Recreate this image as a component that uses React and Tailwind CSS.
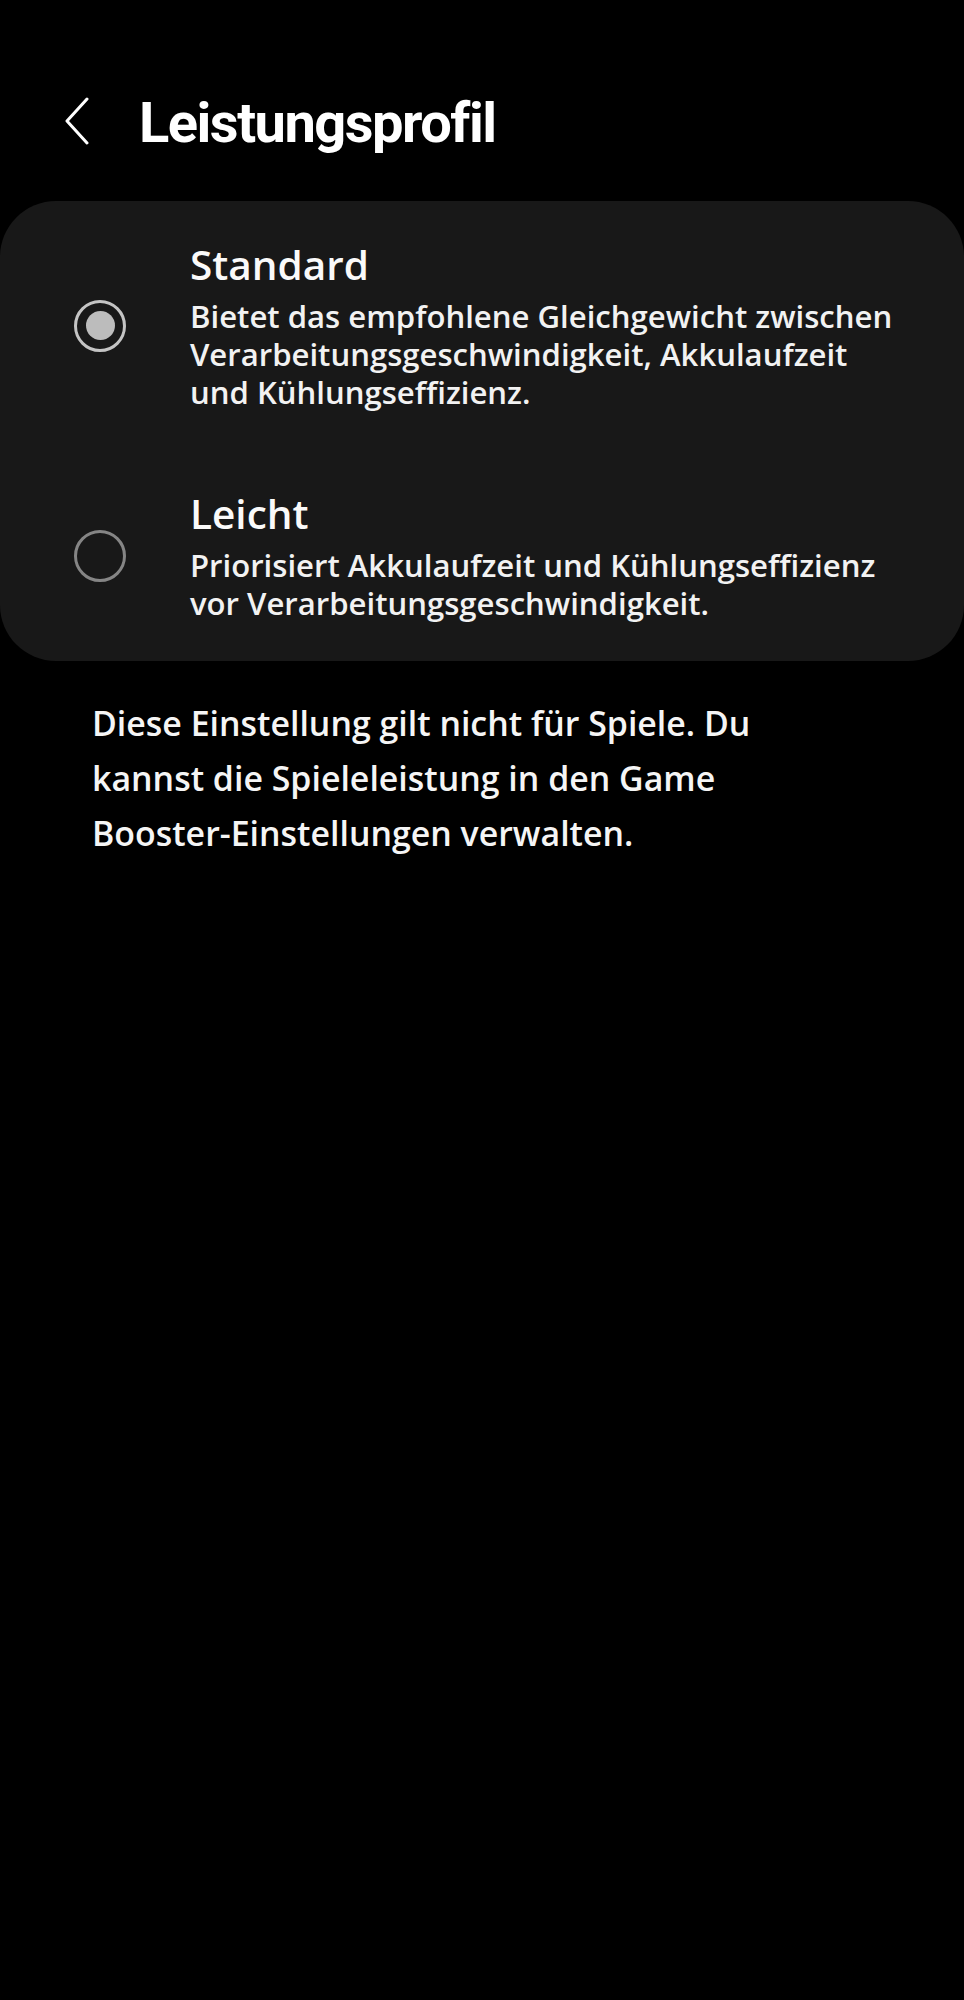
const options = [
  {
    title: "Standard",
    lines: [
      "Bietet das empfohlene Gleichgewicht zwischen",
      "Verarbeitungsgeschwindigkeit, Akkulaufzeit",
      "und Kühlungseffizienz.",
    ],
    checked: true,
  },
  {
    title: "Leicht",
    lines: [
      "Priorisiert Akkulaufzeit und Kühlungseffizienz",
      "vor Verarbeitungsgeschwindigkeit.",
    ],
    checked: false,
  },
]

const Radio = ({ checked }) =>
  checked ? (
    <div className="w-[52px] h-[52px] shrink-0 rounded-full border-[3px] border-[#c4c4c4] flex items-center justify-center">
      <div className="w-[29px] h-[29px] rounded-full bg-[#bcbcbc]" />
    </div>
  ) : (
    <div className="w-[52px] h-[52px] shrink-0 rounded-full border-[3px] border-[#858585]" />
  )

const OptionRow = ({ data }) => (
  <div className="flex items-center pl-[74px] py-[39px]">
    <Radio checked={data.checked} />
    <div className="ml-[64px]">
      <div className="text-[40.5px] leading-[50px] font-semibold text-[#fafafa]">{data.title}</div>
      <p className="mt-[7px] text-[31.1px] leading-[38px] font-semibold text-[#f2f2f2] whitespace-nowrap">
        {data.lines.map((line, i) => (
          <span key={i} className="block">{line}</span>
        ))}
      </p>
    </div>
  </div>
)

export default function App() {
  return (
    <div className="w-[964px] min-h-[2000px] bg-black font-['Open_Sans',sans-serif] text-white pt-[91px]">
      {/* header */}
      <div className="flex items-start pl-[65px]">
        <svg className="mt-[6px] shrink-0" width="24" height="48" viewBox="0 0 24 48" fill="none">
          <polyline points="22,2 2,24 22,46" stroke="#ffffff" strokeWidth="3" strokeLinecap="round" strokeLinejoin="round" />
        </svg>
        <h1 className="ml-[50px] font-['Roboto',sans-serif] font-bold text-[56px] leading-[64px] tracking-[-1.5px] text-white">
          Leistungsprofil
        </h1>
      </div>

      {/* options card */}
      <div className="mt-[46px] bg-[#181818] rounded-[56px]">
        {options.map((o) => (
          <OptionRow key={o.title} data={o} />
        ))}
      </div>

      {/* footer note */}
      <p className="mt-[35px] pl-[92px] text-[33.9px] leading-[55px] font-semibold text-[#f5f5f5]">
        Diese Einstellung gilt nicht für Spiele. Du
        <br />
        kannst die Spieleleistung in den Game
        <br />
        Booster-Einstellungen verwalten.
      </p>
    </div>
  )
}
